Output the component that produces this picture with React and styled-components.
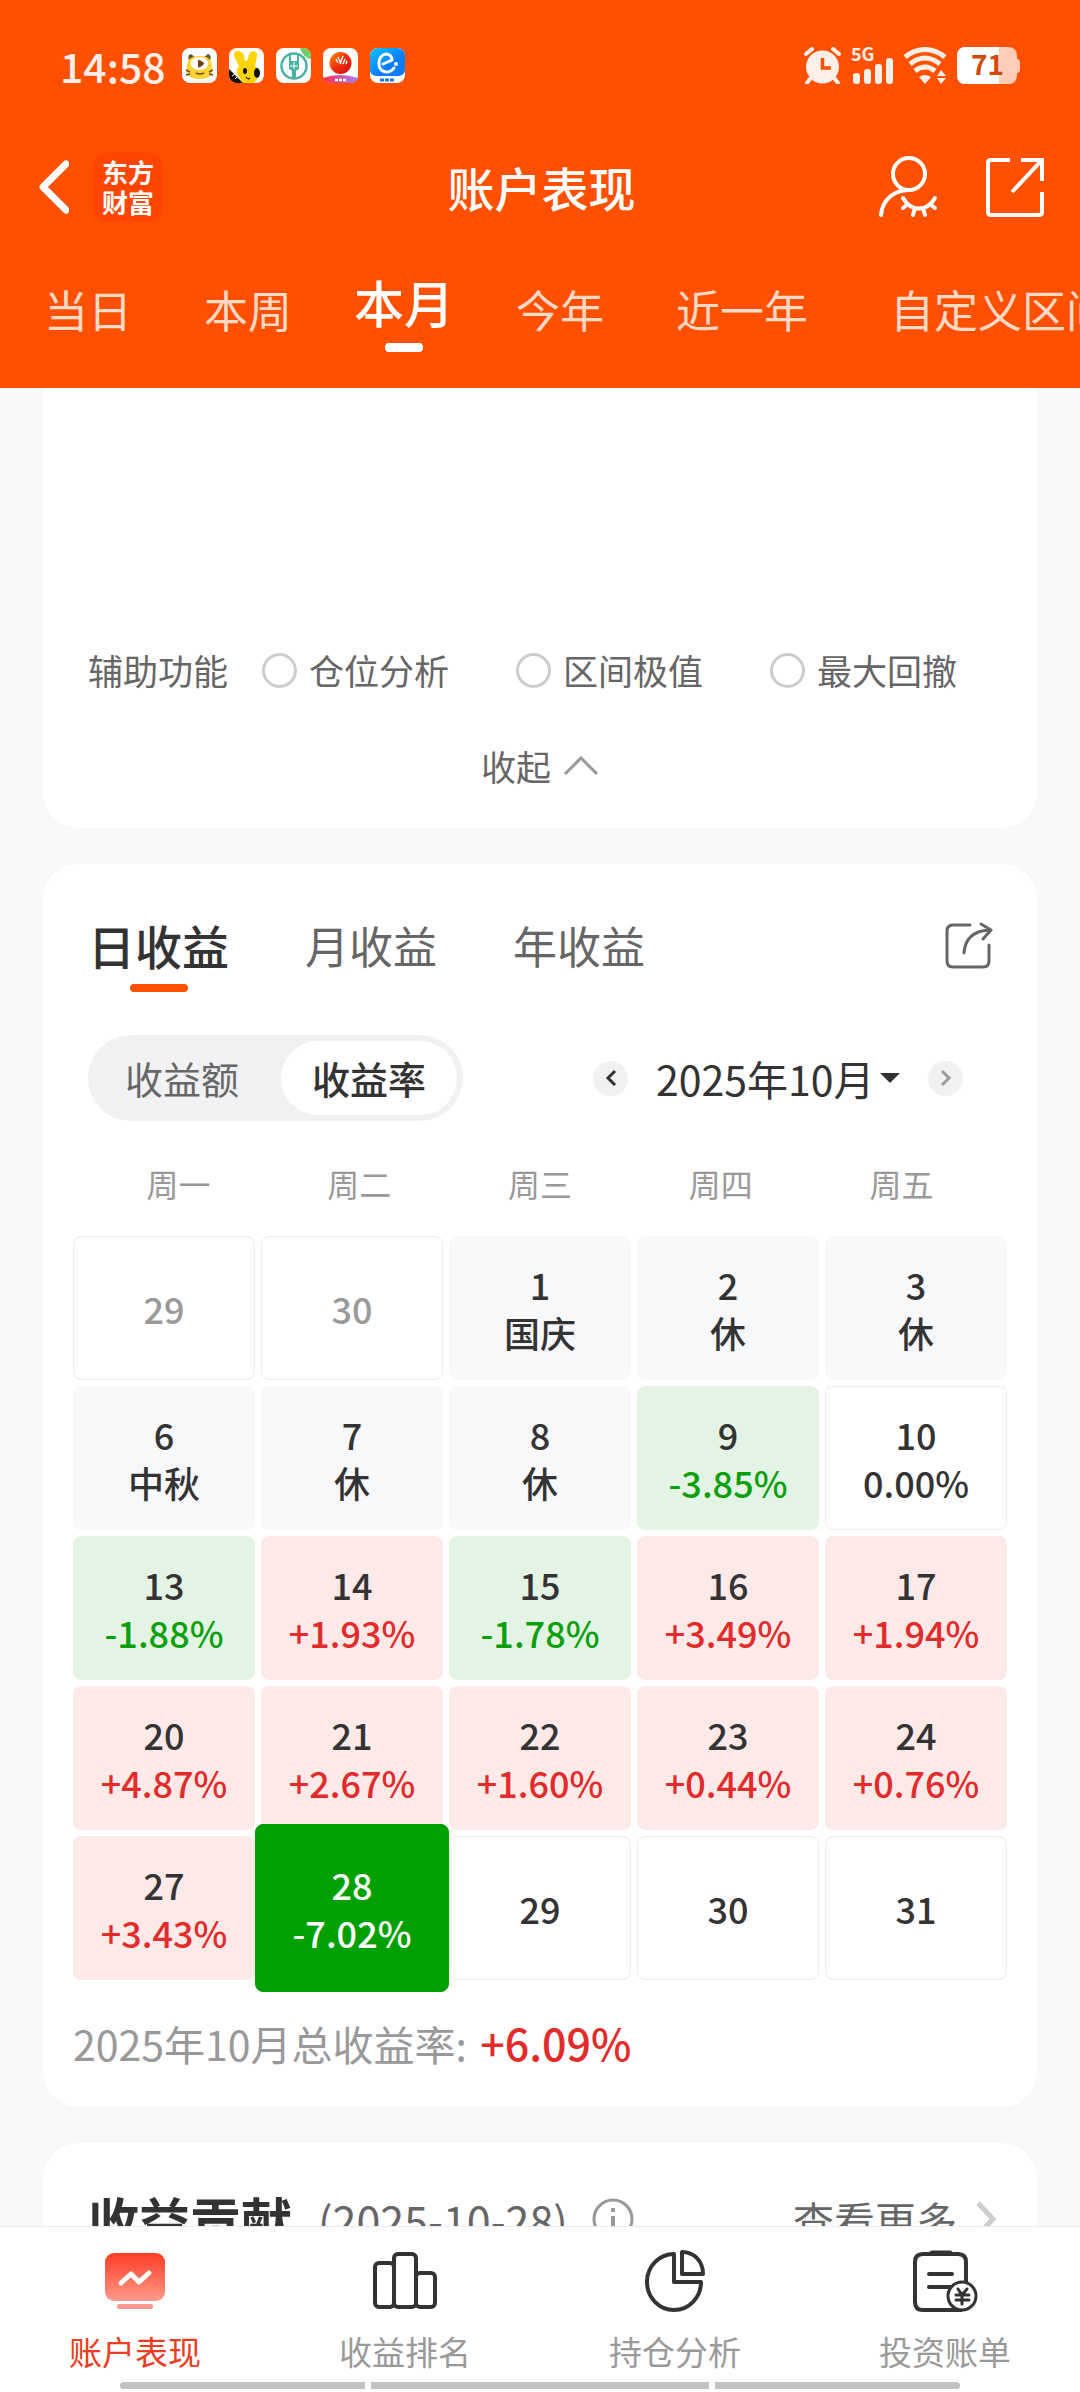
import React, { useState } from "react";
import styled, { createGlobalStyle } from "styled-components";

const RANGES = ["当日", "本周", "本月", "今年", "近一年", "自定义区间"];
const HELPERS = ["仓位分析", "区间极值", "最大回撤"];
const PERIODS = ["日收益", "月收益", "年收益"];
const MODES = ["收益额", "收益率"];
const WEEKDAYS = ["周一", "周二", "周三", "周四", "周五"];

const DAYS = [
  { day: 29, kind: "outside" },
  { day: 30, kind: "outside" },
  { day: 1, kind: "rest", note: "国庆" },
  { day: 2, kind: "rest", note: "休" },
  { day: 3, kind: "rest", note: "休" },
  { day: 6, kind: "rest", note: "中秋" },
  { day: 7, kind: "rest", note: "休" },
  { day: 8, kind: "rest", note: "休" },
  { day: 9, kind: "down", note: "-3.85%" },
  { day: 10, kind: "flat", note: "0.00%" },
  { day: 13, kind: "down", note: "-1.88%" },
  { day: 14, kind: "up", note: "+1.93%" },
  { day: 15, kind: "down", note: "-1.78%" },
  { day: 16, kind: "up", note: "+3.49%" },
  { day: 17, kind: "up", note: "+1.94%" },
  { day: 20, kind: "up", note: "+4.87%" },
  { day: 21, kind: "up", note: "+2.67%" },
  { day: 22, kind: "up", note: "+1.60%" },
  { day: 23, kind: "up", note: "+0.44%" },
  { day: 24, kind: "up", note: "+0.76%" },
  { day: 27, kind: "up", note: "+3.43%" },
  { day: 28, kind: "selected", note: "-7.02%" },
  { day: 29, kind: "flat" },
  { day: 30, kind: "flat" },
  { day: 31, kind: "flat" }
];

const AppIcons = () => (
  <IconRow>
    <svg width="35" height="35" viewBox="0 0 35 35">
      <rect width="35" height="35" rx="8" fill="#fff" />
      <path d="M7 13q-2-6 2-7l5 4zM28 13q2-6-2-7l-5 4z" fill="#6b5430" />
      <path d="M5 19C5 10 11 8 17.500 8S30 10 30 19c2 8-3 12-12.500 12S3 27 5 19z" fill="#fbd232" />
      <ellipse cx="17.500" cy="15.500" rx="9" ry="6.500" fill="#fff" />
      <path d="M16 12c2 0 6 2 6 3.500s-4 4-6 4z" fill="#7a3b1c" />
      <path d="M14 25q4 2 8 0M4 22l4 2M4 27l4-1M31 22l-4 2M31 27l-4-1" stroke="#6b4a20" strokeWidth="1.500" fill="none" />
    </svg>
    <svg width="35" height="35" viewBox="0 0 35 35">
      <rect width="35" height="35" rx="8" fill="#fff" />
      <path d="M5 8c-1-6 8-7 10 0l1 5h2l2-6c2-6 9-4 8 1l-2 10c5 4 4 12-1 17H14L8 26c-1-4 1-7 2-8z" fill="#ffd500" />
      <path d="M0 21l14 14H8a8 8 0 0 1-8-8z" fill="#111" />
      <path d="M3 28l3-2M6 31l3-3" stroke="#fff" strokeWidth="1" />
      <ellipse cx="16" cy="23" rx="2" ry="3" fill="#111" />
      <ellipse cx="28" cy="25" rx="3" ry="5" fill="#111" />
      <path d="M17 29q2 3 4 1" stroke="#111" strokeWidth="1.200" fill="none" />
    </svg>
    <svg width="35" height="35" viewBox="0 0 35 35">
      <rect width="35" height="35" rx="8" fill="#fff" />
      <path d="M24 0h3a8 8 0 0 1 8 8v3q-8-1-11-11z" fill="#6fd06a" />
      <circle cx="18" cy="18" r="12.500" fill="none" stroke="#4bb1a2" strokeWidth="2.500" />
      <path d="M14 5v8M22 5v8" stroke="#4bb1a2" strokeWidth="2" />
      <path d="M13 13h10v8l-3 2v8h-4v-8l-3-2z" fill="#4bb1a2" />
      <path d="M18 14v7M14 18h8" stroke="#fff" strokeWidth="1" />
    </svg>
    <svg width="35" height="35" viewBox="0 0 35 35">
      <defs>
        <linearGradient id="ball" x1="0" y1="0" x2="1" y2="1">
          <stop offset="0" stopColor="#ff8a00" />
          <stop offset="0.500" stopColor="#ef3010" />
          <stop offset="1" stopColor="#c80a10" />
        </linearGradient>
        <linearGradient id="ribbon">
          <stop offset="0" stopColor="#ff2d4a" />
          <stop offset="1" stopColor="#a27bff" />
        </linearGradient>
      </defs>
      <rect width="35" height="35" rx="8" fill="#fff" />
      <circle cx="17.500" cy="15" r="11" fill="url(#ball)" />
      <path d="M13 11l2 4M15 9l3 7M20 8l-3 8M22 11l-2 5M24 13l-1 3" stroke="#fff" strokeWidth="1.400" />
      <path d="M0 30q17-6 35 0a8 8 0 0 1-8 5H8a8 8 0 0 1-8-5z" fill="url(#ribbon)" />
      <path d="M12 32h12" stroke="#fff" strokeWidth="2.500" strokeDasharray="3 1" />
    </svg>
    <svg width="35" height="35" viewBox="0 0 35 35">
      <defs>
        <linearGradient id="sky" x1="0" y1="0" x2="1" y2="1">
          <stop offset="0" stopColor="#12c4ff" />
          <stop offset="0.600" stopColor="#0a7dff" />
        </linearGradient>
      </defs>
      <rect width="35" height="35" rx="8" fill="#fff" />
      <path d="M8 0h19a8 8 0 0 1 8 8v14q0 5-6 6H6q-6-1-6-6V8a8 8 0 0 1 8-8z" fill="url(#sky)" />
      <path d="M13 16l9-4c0-4-3-6-6-6-9 1-10 17 0 18 4 0 6-1 8-4" stroke="#fff" strokeWidth="3" fill="none" strokeLinecap="round" />
      <circle cx="26" cy="16" r="2" fill="#fff" />
      <path d="M10 32h14" stroke="#0a7dff" strokeWidth="3" strokeDasharray="4 1" />
    </svg>
  </IconRow>
);

const AlarmIcon = () => (
  <svg width="37" height="37" viewBox="0 0 37 37">
    <circle cx="18.500" cy="20" r="16.500" fill="#ffefe8" />
    <path d="M2 7l6-5M35 7l-6-5M6 32l-3 4M31 32l3 4" stroke="#ffefe8" strokeWidth="4" strokeLinecap="round" />
    <path d="M18.500 11v10H27" stroke="#ff5000" strokeWidth="3.500" fill="none" />
  </svg>
);

const SignalIcon = () => (
  <svg width="42" height="37" viewBox="0 0 42 37">
    <text x="0" y="14" fontSize="18" fontWeight="700" fill="#ffefe8">5G</text>
    <g fill="#ffefe8">
      <rect x="2" y="26" width="7" height="11" rx="3" />
      <rect x="13" y="22" width="7" height="15" rx="3" />
      <rect x="24" y="17" width="7" height="20" rx="3" />
      <rect x="35" y="11" width="7" height="26" rx="3" />
    </g>
  </svg>
);

const WifiIcon = () => (
  <svg width="44" height="37" viewBox="0 0 44 37">
    <g fill="none" stroke="#ffefe8" strokeWidth="5">
      <path d="M2 10Q22-5 42 10" />
      <path d="M7 17Q22 5 37 17" />
      <path d="M12 24Q22 16 32 24" />
    </g>
    <path d="M16 30q6-4 12 0l-6 7zM34 29l4-6 5 6zM34 31h9l-5 6z" fill="#ffefe8" />
  </svg>
);

const BatteryIcon = () => (
  <svg width="63" height="37" viewBox="0 0 63 37">
    <path d="M9 0h42q9 0 9 9v3q3 0 3 4v6q0 4-3 4v2q0 9-9 9H9q-9 0-9-9V9q0-9 9-9z" fill="#ffcdb6" />
    <path d="M9 0h33v37H9q-9 0-9-9V9q0-9 9-9z" fill="#fff" />
    <text x="14" y="28" fontSize="28" fontWeight="700" fill="#d24808">71</text>
  </svg>
);

const BackIcon = () => (
  <svg width="30" height="54" viewBox="0 0 30 54" fill="none">
    <path d="M27 4L4 27l23 23" stroke="#fff" strokeWidth="7" strokeLinecap="round" strokeLinejoin="round" />
  </svg>
);

const AccountIcon = () => (
  <svg width="60" height="64" viewBox="0 0 60 64" fill="none" stroke="#fff" strokeWidth="4" strokeLinecap="round">
    <circle cx="31" cy="19" r="16" />
    <path d="M31 35C15 35 4 46 3 60" />
    <path d="M25 43c8 14 24 14 32 0M30 49l-5 4M37 53l-2 7M45 53l2 7M52 49l5 4" />
  </svg>
);

const OpenIcon = () => (
  <svg width="58" height="60" viewBox="0 0 58 60" fill="none" stroke="#fff" strokeWidth="4">
    <path d="M24 3H5q-3 0-3 3v49q0 3 3 3h48q3 0 3-3V35" />
    <path d="M35 3h21v21M56 3L26 35" />
  </svg>
);

const ChevronUp = () => (
  <svg width="36" height="20" viewBox="0 0 36 20" fill="none">
    <path d="M2 18L18 2l16 16" stroke="#999" strokeWidth="3" />
  </svg>
);

const ShareIcon = () => (
  <svg width="48" height="48" viewBox="0 0 48 48" fill="none" stroke="#666" strokeWidth="3" strokeLinecap="round">
    <path d="M25 3H8Q2 3 2 9v30q0 6 6 6h30q6 0 6-6V23" />
    <path d="M19 31C20 17 28 9 44 8M36 2l10 6-8 9" strokeLinejoin="round" />
  </svg>
);

const ArrowIcon = ({ next }) => (
  <svg width="12" height="18" viewBox="0 0 12 18" fill="none">
    <path
      d={next ? "M2 2l7 7-7 7" : "M10 2L3 9l7 7"}
      stroke={next ? "#999" : "#333"}
      strokeWidth="3"
    />
  </svg>
);

const InfoIcon = () => (
  <svg width="42" height="42" viewBox="0 0 42 42" fill="none" stroke="#999" strokeWidth="3">
    <circle cx="21" cy="21" r="19" />
    <path d="M21 18v14M21 10v4" strokeWidth="4" />
  </svg>
);

const MoreIcon = () => (
  <svg width="22" height="36" viewBox="0 0 22 36" fill="none">
    <path d="M3 2l15 16L3 34" stroke="#ccc" strokeWidth="5" />
  </svg>
);

const PerformanceIcon = () => (
  <svg width="64" height="64" viewBox="0 0 64 64" fill="none">
    <defs>
      <linearGradient id="panel" x1="0" y1="0" x2="0" y2="1">
        <stop offset="0" stopColor="#ff3c22" />
        <stop offset="1" stopColor="#ff9a8c" />
      </linearGradient>
    </defs>
    <rect x="2" y="4" width="60" height="48" rx="9" fill="url(#panel)" />
    <path d="M18 34l10-9 8 8 10-9" stroke="#fff" strokeWidth="5" strokeLinecap="round" strokeLinejoin="round" />
    <rect x="14" y="55" width="36" height="5" rx="2" fill="#ff9a8c" />
  </svg>
);

const RankIcon = () => (
  <svg width="64" height="64" viewBox="0 0 64 64" fill="none" stroke="#333" strokeWidth="4">
    <rect x="2" y="14" width="19" height="44" rx="4" />
    <rect x="21" y="5" width="22" height="53" rx="4" />
    <rect x="43" y="24" width="19" height="34" rx="4" />
  </svg>
);

const PieIcon = () => (
  <svg width="64" height="64" viewBox="0 0 64 64" fill="none" stroke="#333" strokeWidth="4" strokeLinejoin="round">
    <path d="M31 5a27 28 0 1 0 27 28H31z" />
    <path d="M39 3v22h21C60 12 51 3 39 3z" />
  </svg>
);

const BillIcon = () => (
  <svg width="66" height="64" viewBox="0 0 66 64" fill="none" stroke="#333" strokeWidth="4" strokeLinecap="round">
    <path d="M54 34V13q0-8-8-8H11q-8 0-8 8v40q0 8 8 8h38" />
    <path d="M20 4h18" strokeWidth="5" />
    <path d="M17 25h23M17 38h23" />
    <circle cx="50" cy="47" r="14" fill="#fff" strokeWidth="3" />
    <path d="M46 40l4 6 5-6M50 46v9M44 46h13M44 51h13" strokeWidth="3" />
  </svg>
);

const MENU = [
  { label: "账户表现", Icon: PerformanceIcon },
  { label: "收益排名", Icon: RankIcon },
  { label: "持仓分析", Icon: PieIcon },
  { label: "投资账单", Icon: BillIcon }
];

const App = () => {
  const [range, setRange] = useState("本月");
  const [period, setPeriod] = useState("日收益");
  const [mode, setMode] = useState("收益率");
  const [menu, setMenu] = useState("账户表现");

  return (
    <Screen>
      <GlobalStyle />
      <Header>
        <StatusBar>
          <Clock>14:58</Clock>
          <AppIcons />
          <StatusIcons>
            <AlarmIcon />
            <SignalIcon />
            <WifiIcon />
            <BatteryIcon />
          </StatusIcons>
        </StatusBar>

        <TitleBar>
          <HeaderSide>
            <IconButton aria-label="返回">
              <BackIcon />
            </IconButton>
            <Logo>
              东方
              <br />
              财富
            </Logo>
          </HeaderSide>
          <Title>账户表现</Title>
          <HeaderSide $end>
            <IconButton aria-label="隐藏账户">
              <AccountIcon />
            </IconButton>
            <IconButton aria-label="分享">
              <OpenIcon />
            </IconButton>
          </HeaderSide>
        </TitleBar>

        <RangeTabs>
          {RANGES.map(name => (
            <RangeTab
              key={name}
              $active={name === range}
              $wide={name.length > 3}
              onClick={() => setRange(name)}
            >
              {name}
            </RangeTab>
          ))}
        </RangeTabs>
      </Header>

      <Content>
        <ChartCard>
          <HelperRow>
            <span>辅助功能</span>
            <HelperList>
              {HELPERS.map(name => (
                <HelperLabel key={name}>
                  <input type="radio" name="helper" />
                  {name}
                </HelperLabel>
              ))}
            </HelperList>
          </HelperRow>
          <FoldButton>
            收起
            <ChevronUp />
          </FoldButton>
        </ChartCard>

        <Card>
          <PeriodBar>
            {PERIODS.map(name => (
              <PeriodTab
                key={name}
                $active={name === period}
                onClick={() => setPeriod(name)}
              >
                {name}
              </PeriodTab>
            ))}
            <ShareButton aria-label="分享收益">
              <ShareIcon />
            </ShareButton>
          </PeriodBar>

          <FilterBar>
            <Switch>
              {MODES.map(name => (
                <SwitchItem
                  key={name}
                  $active={name === mode}
                  onClick={() => setMode(name)}
                >
                  {name}
                </SwitchItem>
              ))}
            </Switch>
            <MonthPicker>
              <RoundButton aria-label="上个月">
                <ArrowIcon />
              </RoundButton>
              <MonthField>
                <select aria-label="月份" defaultValue="2025年10月">
                  <option>2025年10月</option>
                </select>
              </MonthField>
              <RoundButton aria-label="下个月">
                <ArrowIcon next />
              </RoundButton>
            </MonthPicker>
          </FilterBar>

          <WeekRow>
            {WEEKDAYS.map(name => (
              <span key={name}>{name}</span>
            ))}
          </WeekRow>
          <Calendar>
            {DAYS.map(({ day, kind, note }, index) => (
              <DayCell key={index} $kind={kind}>
                <span>{day}</span>
                {note && <DayNote $kind={kind}>{note}</DayNote>}
              </DayCell>
            ))}
          </Calendar>
          <Total>
            2025年10月总收益率: <strong>+6.09%</strong>
          </Total>
        </Card>

        <Card>
          <GiveBar>
            <h2>收益贡献</h2>
            <GiveDate>(2025-10-28)</GiveDate>
            <InfoIcon />
            <MoreLink href="#more">
              查看更多
              <MoreIcon />
            </MoreLink>
          </GiveBar>
        </Card>
      </Content>

      <Footer>
        <Menu>
          {MENU.map(({ label, Icon }) => (
            <MenuButton
              key={label}
              $active={label === menu}
              onClick={() => setMenu(label)}
            >
              <Icon />
              {label}
            </MenuButton>
          ))}
        </Menu>
        <GestureBar>
          <span />
          <span />
          <span />
        </GestureBar>
      </Footer>
    </Screen>
  );
};

export default App;

const ORANGE = "#ff5000";
const RED = "#e22b2b";
const GREEN = "#09a00c";

const CELL_COLORS = {
  outside: { back: "#fff", border: "#ededed", text: "#999", note: "#999" },
  flat: { back: "#fff", border: "#ededed", text: "#333", note: "#333" },
  rest: { back: "#f7f8fa", border: "#f7f8fa", text: "#333", note: "#333" },
  up: { back: "#fde9e8", border: "#fde9e8", text: "#333", note: RED },
  down: { back: "#e4f4e4", border: "#e4f4e4", text: "#333", note: GREEN },
  selected: { back: "#00a000", border: "#00a000", text: "#fff", note: "#fff" }
};

const GlobalStyle = createGlobalStyle`
  * {
    box-sizing: border-box;
  }

  body {
    margin: 0;
    background: #f7f8fa;
    font-family: "Noto Sans CJK SC", sans-serif;
  }

  button, select, input {
    margin: 0;
    padding: 0;
    border: none;
    background: none;
    font: inherit;
    color: inherit;
  }

  svg {
    display: block;
    flex: none;
  }
`;

const Screen = styled.div`
  display: flex;
  flex-direction: column;
  height: 100vh;
  color: #333;
`;

const Header = styled.header`
  flex: none;
  background: ${ORANGE};
  color: #fff;
`;

const StatusBar = styled.div`
  display: flex;
  align-items: center;
  height: 130px;
  padding: 0 60px;
`;

const Clock = styled.span`
  margin-right: 16px;
  color: #ffefe8;
  font-size: 41px;
  font-weight: 500;
  line-height: 60px;
`;

const IconRow = styled.div`
  display: flex;
  gap: 12px;
`;

const StatusIcons = styled.div`
  display: flex;
  gap: 10px;
  margin-left: auto;
`;

const TitleBar = styled.div`
  display: flex;
  align-items: center;
  height: 114px;
  padding: 0 36px 0 39px;
`;

const HeaderSide = styled.div`
  display: flex;
  flex: 1;
  align-items: center;
  justify-content: ${props => (props.$end ? "flex-end" : "flex-start")};
  gap: ${props => (props.$end ? "48px" : "24px")};
`;

const IconButton = styled.button`
  display: flex;
`;

const Logo = styled.div`
  width: 70px;
  padding: 5px 0;
  border-radius: 15px;
  background: #ff4600;
  font-size: 26px;
  font-weight: 700;
  line-height: 30px;
  text-align: center;
`;

const Title = styled.h1`
  margin: 0;
  font-size: 47px;
  font-weight: 500;
  line-height: 58px;
`;

const RangeTabs = styled.nav`
  display: flex;
  align-items: flex-start;
  height: 144px;
  padding: 27px 0 0 8px;
  overflow: hidden;
`;

const RangeTab = styled.button`
  flex: none;
  padding: ${props => (props.$active ? "0 26px" : "8px 36px 0")};
  padding-left: ${props => props.$wide && "46px"};
  color: ${props => (props.$active ? "#fff" : "#ffd9c6")};
  font-size: ${props => (props.$active ? "50px" : "44px")};
  font-weight: ${props => (props.$active ? 500 : 400)};
  line-height: 60px;
  white-space: nowrap;

  &::after {
    content: "";
    display: ${props => (props.$active ? "block" : "none")};
    width: 38px;
    height: 9px;
    margin: 12px auto 0;
    border-radius: 4px;
    background: #fff;
  }
`;

const Content = styled.main`
  display: flex;
  flex: 1;
  flex-direction: column;
  gap: 36px;
  min-height: 0;
  padding: 0 43px;
  overflow: hidden;
`;

const Card = styled.section`
  flex: none;
  border-radius: 36px;
  background: #fff;
`;

const ChartCard = styled(Card)`
  padding: 264px 45px 38px;
  border-radius: 0 0 36px 36px;
  color: #666;
  font-size: 35px;
`;

const HelperRow = styled.div`
  display: flex;
  align-items: center;
  gap: 34px;
  line-height: 36px;
`;

const HelperList = styled.div`
  display: flex;
  gap: 67px;
`;

const HelperLabel = styled.label`
  display: flex;
  align-items: center;
  gap: 12px;

  input {
    width: 35px;
    height: 35px;
    border: 3px solid #ccc;
    border-radius: 50%;
    appearance: none;
  }

  input:checked {
    border: 10px solid ${ORANGE};
  }
`;

const FoldButton = styled.button`
  display: flex;
  align-items: center;
  gap: 12px;
  margin: 54px auto 0;
  line-height: 48px;
`;

const PeriodBar = styled.div`
  display: flex;
  align-items: flex-start;
  gap: 76px;
  height: 171px;
  padding: 51px 44px 0 45px;
`;

const PeriodTab = styled.button`
  color: ${props => (props.$active ? "#333" : "#666")};
  font-size: ${props => (props.$active ? "47px" : "44px")};
  font-weight: ${props => (props.$active ? 500 : 400)};
  line-height: 60px;

  &::after {
    content: "";
    display: ${props => (props.$active ? "block" : "none")};
    width: 58px;
    height: 8px;
    margin: 9px auto 0;
    border-radius: 4px;
    background: ${ORANGE};
  }
`;

const ShareButton = styled.button`
  margin-left: auto;
  padding-top: 7px;
`;

const FilterBar = styled.div`
  display: flex;
  align-items: center;
  justify-content: space-between;
  padding: 0 74px 0 45px;
`;

const Switch = styled.div`
  display: flex;
  gap: 11px;
  padding: 6px;
  border-radius: 43px;
  background: #f1f1f3;
`;

const SwitchItem = styled.button`
  padding: 0 31px;
  border-radius: 37px;
  background: ${props => (props.$active ? "#fff" : "none")};
  color: ${props => (props.$active ? "#333" : "#666")};
  font-size: 38px;
  font-weight: ${props => (props.$active ? 500 : 400)};
  line-height: 74px;
`;

const MonthPicker = styled.div`
  display: flex;
  align-items: center;
  gap: 28px;
`;

const RoundButton = styled.button`
  display: flex;
  align-items: center;
  justify-content: center;
  width: 35px;
  height: 35px;
  border-radius: 50%;
  background: #f1f1f3;
`;

const MonthField = styled.div`
  display: flex;
  align-items: center;
  gap: 5px;
  font-size: 41px;
  line-height: 60px;

  select {
    appearance: none;
  }

  &::after {
    content: "";
    border: 10px solid transparent;
    border-top-color: #333;
    border-bottom: none;
  }
`;

const WeekRow = styled.div`
  display: grid;
  grid-template-columns: repeat(5, 1fr);
  padding: 42px 45px 33px;
  color: #999;
  font-size: 32px;
  line-height: 40px;
  text-align: center;
`;

const Calendar = styled.div`
  display: grid;
  grid-template-columns: repeat(5, 1fr);
  grid-auto-rows: 144px;
  gap: 6px;
  padding: 0 30px;
`;

const DayCell = styled.button`
  display: flex;
  flex-direction: column;
  align-items: center;
  justify-content: center;
  border: 1px solid ${props => CELL_COLORS[props.$kind].border};
  border-radius: 8px;
  background: ${props => CELL_COLORS[props.$kind].back};
  color: ${props => CELL_COLORS[props.$kind].text};
  font-size: 36px;
  font-weight: 500;
  line-height: 48px;
  margin: ${props => props.$kind === "selected" && "-12px -6px"};
  z-index: ${props => props.$kind === "selected" && 1};
`;

const DayNote = styled.span`
  color: ${props => CELL_COLORS[props.$kind].note};
`;

const Total = styled.p`
  margin: 0;
  padding: 32px 30px 34px;
  color: #999;
  font-size: 41px;
  line-height: 60px;

  strong {
    margin-left: 4px;
    color: ${RED};
    font-size: 43px;
    font-weight: 500;
  }
`;

const GiveBar = styled.div`
  display: flex;
  align-items: center;
  padding: 46px 40px 60px 45px;
  color: #666;
  font-size: 41px;
  line-height: 60px;

  h2 {
    margin: 0 26px 0 0;
    color: #333;
    font-size: 51px;
    font-weight: 700;
  }
`;

const GiveDate = styled.span`
  margin-right: 24px;
  font-size: 43px;
`;

const MoreLink = styled.a`
  display: flex;
  align-items: center;
  gap: 18px;
  margin-left: auto;
  color: inherit;
  text-decoration: none;
`;

const Footer = styled.footer`
  flex: none;
  border-top: 1px solid #ebebeb;
  background: #fff;
`;

const Menu = styled.nav`
  display: grid;
  grid-template-columns: repeat(4, 1fr);
`;

const MenuButton = styled.button`
  display: flex;
  flex-direction: column;
  align-items: center;
  gap: 18px;
  padding: 22px 0 11px;
  color: ${props => (props.$active ? "#ea3d22" : "#999")};
  font-size: 33px;
  line-height: 40px;
`;

const GestureBar = styled.div`
  display: grid;
  grid-template-columns: 1fr 338px 1fr;
  gap: 6px;
  padding: 0 120px 3px;

  span {
    height: 7px;
    background: #c1c1c1;
  }

  span:first-child {
    border-radius: 4px 0 0 4px;
  }

  span:last-child {
    border-radius: 0 4px 4px 0;
  }
`;
